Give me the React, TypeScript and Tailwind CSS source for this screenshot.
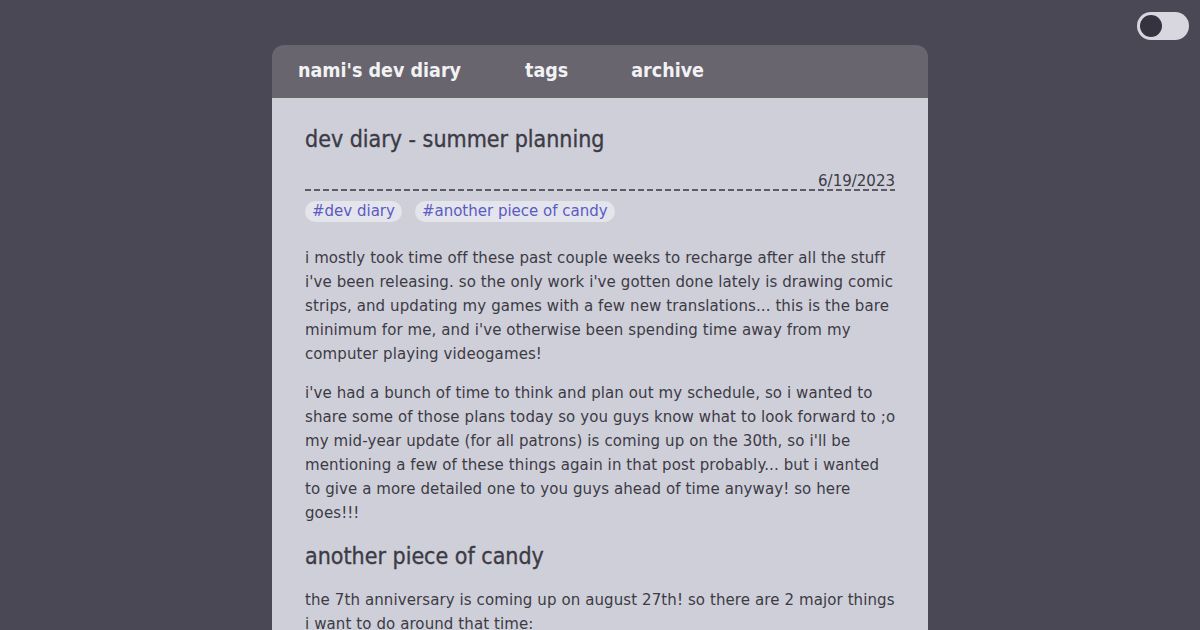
import React from "react";

export default function App() {
  const body = { fontFamily: '"DejaVu Sans", sans-serif' } as React.CSSProperties;
  const cond = { fontFamily: '"DejaVu Sans Condensed", "DejaVu Sans", sans-serif', fontStretch: "condensed" } as React.CSSProperties;
  return (
    <div className="min-h-[630px] w-full bg-[#4b4855] relative overflow-hidden" style={body}>
      <div className="absolute right-[11px] top-[12px] w-[52px] h-[28px] rounded-full bg-[#d8d7df] flex items-center pl-[3px]">
        <div className="w-[22px] h-[22px] rounded-full bg-[#35333f]" />
      </div>
      <div className="pt-[45px] flex justify-center">
        <div className="w-[656px] rounded-t-[12px] overflow-hidden">
          <nav className="h-[53px] bg-[#68656f] flex items-center pl-[26px] pb-[1px] text-[19.5px] font-bold text-[#f2f2f5]" style={cond}>
            <span>nami's dev diary</span>
            <span className="ml-[64px]">tags</span>
            <span className="ml-[63px]">archive</span>
          </nav>
          <main className="bg-[#cfcfd9] px-[33px] pt-[26px] pb-[40px] text-[#3c3b45]">
            <h1 className="text-[23px] leading-[30px] [-webkit-text-stroke:0.35px_#3c3b45]" style={cond}>dev diary - summer planning</h1>
            <div className="mt-[17px] flex justify-end text-[15px] leading-[20px] bg-[linear-gradient(to_right,#5d5c66_6px,transparent_6px)] bg-[length:9px_2px] bg-repeat-x bg-left-bottom">
              <span>6/19/2023</span>
            </div>
            <div className="mt-[10px] flex gap-[13px] text-[15px]">
              <span className="bg-[#e4e4ec] text-[#5b5bc4] rounded-full px-[7px] leading-[21px]">#dev diary</span>
              <span className="bg-[#e4e4ec] text-[#5b5bc4] rounded-full px-[7px] leading-[21px]">#another piece of candy</span>
            </div>
            <div className="text-[15px] leading-[24px] tracking-[0.1px] whitespace-nowrap">
              <p className="mt-[24px]">
                i mostly took time off these past couple weeks to recharge after all the stuff<br />
                i've been releasing. so the only work i've gotten done lately is drawing comic<br />
                strips, and updating my games with a few new translations... this is the bare<br />
                minimum for me, and i've otherwise been spending time away from my<br />
                computer playing videogames!
              </p>
              <p className="mt-[15px]">
                i've had a bunch of time to think and plan out my schedule, so i wanted to<br />
                share some of those plans today so you guys know what to look forward to ;o<br />
                my mid-year update (for all patrons) is coming up on the 30th, so i'll be<br />
                mentioning a few of these things again in that post probably... but i wanted<br />
                to give a more detailed one to you guys ahead of time anyway! so here<br />
                goes!!!
              </p>
            </div>
            <h2 className="mt-[16px] text-[23px] leading-[30px] [-webkit-text-stroke:0.35px_#3c3b45]" style={cond}>another piece of candy</h2>
            <p className="mt-[17px] text-[15px] leading-[24px] tracking-[0.1px] whitespace-nowrap">
              the 7th anniversary is coming up on august 27th! so there are 2 major things<br />
              i want to do around that time:
            </p>
          </main>
        </div>
      </div>
    </div>
  );
}
